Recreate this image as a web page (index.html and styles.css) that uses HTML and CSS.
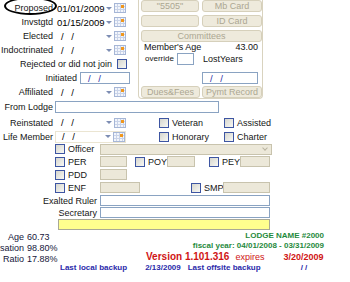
FILE: index.html
```html
<!DOCTYPE html>
<html lang="en">
<head>
    <meta charset="UTF-8">
    <title>Member Record</title>
    <link rel="stylesheet" href="styles.css">
</head>
<body>
<div class="form">
    <div class="top">
        <div class="dates">
            <div class="row">
                <label class="lbl"><span class="circled">Proposed</span></label>
                <div class="date"><span class="val">01/01/2009</span><span class="arrow"></span><span class="cal"></span></div>
            </div>
            <div class="row">
                <label class="lbl">Invstgtd</label>
                <div class="date"><span class="val">01/15/2009</span><span class="arrow"></span><span class="cal"></span></div>
            </div>
            <div class="row">
                <label class="lbl">Elected</label>
                <div class="date"><span class="val empty">/ /</span><span class="arrow"></span><span class="cal"></span></div>
            </div>
            <div class="row">
                <label class="lbl">Indoctrinated</label>
                <div class="date"><span class="val empty">/ /</span><span class="arrow"></span><span class="cal"></span></div>
            </div>
            <div class="row rejected">
                <span>Rejected or did not join</span><span class="cb"></span>
            </div>
            <div class="row">
                <label class="lbl wide">Initiated</label>
                <div class="box init"><span class="empty">/ /</span></div>
            </div>
            <div class="row">
                <label class="lbl">Affiliated</label>
                <div class="date"><span class="val empty">/ /</span><span class="arrow"></span><span class="cal"></span></div>
            </div>
        </div>

        <div class="panel">
            <div class="btn-grid">
                <div class="btn">"5505"</div>
                <div class="btn">Mb Card</div>
                <div class="btn"></div>
                <div class="btn">ID Card</div>
                <div class="btn span2">Committees</div>
            </div>
            <div class="age">
                <span>Member's Age</span><span>43.00</span>
            </div>
            <div class="override">
                <span class="small">override</span>
                <div class="box ovr"></div>
                <span class="lost">LostYears</span>
            </div>
            <div class="box pdate"><span class="empty">/ /</span></div>
            <div class="btn-row">
                <div class="btn dues">Dues&amp;Fees</div>
                <div class="btn pymt">Pymt Record</div>
            </div>
        </div>
    </div>

    <div class="lower">
        <div class="row">
            <label class="lbl">From Lodge</label>
            <div class="box lodge"></div>
        </div>
        <div class="row">
            <label class="lbl">Reinstated</label>
            <div class="date"><span class="val empty">/ /</span><span class="arrow"></span><span class="cal"></span></div>
            <div class="checks">
                <div class="opt"><span class="cb"></span>Veteran</div>
                <div class="opt"><span class="cb"></span>Assisted</div>
            </div>
        </div>
        <div class="row">
            <label class="lbl">Life Member</label>
            <div class="date framed"><span class="val empty">/ /</span><span class="arrow"></span><span class="cal"></span></div>
            <div class="checks">
                <div class="opt"><span class="cb"></span>Honorary</div>
                <div class="opt"><span class="cb"></span>Charter</div>
            </div>
        </div>
        <div class="row indent">
            <div class="opt first"><span class="cb"></span>Officer</div>
            <div class="field sel"><span class="chev"></span></div>
        </div>
        <div class="row indent">
            <div class="opt first"><span class="cb"></span>PER</div>
            <div class="field w27"></div>
            <div class="opt poy"><span class="cb"></span>POY</div>
            <div class="field w28"></div>
            <div class="opt pey"><span class="cb"></span>PEY</div>
            <div class="field w30"></div>
        </div>
        <div class="row indent">
            <div class="opt first"><span class="cb"></span>PDD</div>
            <div class="field w27"></div>
        </div>
        <div class="row indent">
            <div class="opt first"><span class="cb"></span>ENF</div>
            <div class="field w40"></div>
            <div class="opt smp"><span class="cb"></span>SMP</div>
            <div class="field w47"></div>
        </div>
        <div class="row">
            <label class="lbl officer-lbl">Exalted Ruler</label>
            <div class="box officer"></div>
        </div>
        <div class="row">
            <label class="lbl officer-lbl">Secretary</label>
            <div class="box officer"></div>
        </div>
        <div class="row">
            <div class="note"></div>
        </div>
    </div>

    <div class="bottom">
        <div class="stats">
            <span class="stat-lbl">Age</span><span>60.73</span>
            <span class="stat-lbl">sation</span><span>98.80%</span>
            <span class="stat-lbl">Ratio</span><span>17.88%</span>
        </div>
        <div class="info">
            <div class="green">LODGE NAME #2000</div>
            <div class="green">fiscal year: 04/01/2008 - 03/31/2009</div>
            <div class="version-line">
                <span class="version">Version 1.101.316</span>
                <span class="expires">expires</span>
                <span class="exp-date">3/20/2009</span>
            </div>
            <div class="backup-line">
                <span>Last local backup</span>
                <span class="local-date">2/13/2009</span>
                <span class="offsite">Last offsite backup</span>
                <span class="offsite-date">/ /</span>
            </div>
        </div>
    </div>
</div>
</body>
</html>
```

FILE: styles.css
```css
body {
    margin: 0;
    width: 350px;
    height: 282px;
    overflow: hidden;
    background: #fff;
    font-family: "Liberation Sans", Arial, sans-serif;
    font-size: 9px;
    color: #151515;
}
.row {
    display: flex;
    align-items: center;
}
.lbl {
    width: 55px;
    flex-shrink: 0;
    padding-right: 2px;
    box-sizing: border-box;
    text-align: right;
    white-space: nowrap;
}
.lbl.wide {
    width: 79px;
}
.circled {
    position: relative;
}
.circled::before {
    content: "";
    position: absolute;
    left: -10px;
    top: -6px;
    width: 49px;
    height: 14px;
    border: 2px solid #000;
    border-radius: 50%;
}

/* top block */
.top {
    display: flex;
    height: 99px;
}
.dates {
    width: 138px;
    padding-top: 1px;
    box-sizing: border-box;
    display: grid;
    grid-template-rows: repeat(7, 14px);
    align-content: start;
}
.date {
    display: flex;
    align-items: center;
    width: 71px;
    height: 12px;
    box-sizing: border-box;
}
.date.framed {
    border: 1px solid #ebe5d2;
}
.date .val {
    flex: 1;
    padding-left: 2px;
    font-size: 9.5px;
    color: #000;
}
.empty {
    color: #2b2ba6;
    word-spacing: 5px;
}
.date .val.empty {
    padding-left: 6px;
}
.arrow {
    width: 0;
    height: 0;
    margin-right: 2px;
    border-left: 3px solid transparent;
    border-right: 3px solid transparent;
    border-top: 3px solid #7d8db3;
}
.cal {
    width: 10px;
    height: 8px;
    border: 1px solid #a6b6d6;
    background:
        radial-gradient(circle at 7.5px 2.5px, #f0961a 1.4px, transparent 1.8px),
        repeating-linear-gradient(90deg, transparent 0 2px, #c9d3e8 2px 3px),
        repeating-linear-gradient(0deg, transparent 0 2px, #c9d3e8 2px 3px),
        #f2f5fb;
}
.rejected {
    justify-content: flex-end;
    padding-right: 11px;
}
.rejected .cb {
    margin-left: 5px;
}
.cb {
    width: 8px;
    height: 8px;
    flex-shrink: 0;
    border: 1px solid #3d55a2;
    background: linear-gradient(135deg, #d6d6ce, #f8f8f4);
}
.box {
    height: 12px;
    box-sizing: border-box;
    border: 1px solid #8aa3c2;
    background: #fff;
    display: flex;
    align-items: center;
}
.box .empty {
    padding-left: 7px;
    font-size: 9.5px;
}
.init {
    width: 50px;
    margin-left: 1px;
}

/* right panel */
.panel {
    width: 125px;
    height: 99px;
    box-sizing: border-box;
    padding-left: 2px;
    border: 1px solid #d9d3bf;
    border-top: none;
    border-radius: 0 0 4px 4px;
}
.btn-grid {
    display: grid;
    grid-template-columns: 58px 60px;
    grid-template-rows: repeat(3, 12px);
    gap: 3px;
}
.btn {
    display: flex;
    align-items: center;
    justify-content: center;
    box-sizing: border-box;
    border: 1px solid #d6d0bb;
    border-radius: 3px;
    background: #eeeadc;
    color: #aca792;
    white-space: nowrap;
}
.span2 {
    grid-column: span 2;
}
.age {
    display: flex;
    justify-content: space-between;
    align-items: center;
    height: 10px;
    padding: 0 4px 0 3px;
    color: #111;
}
.override {
    display: flex;
    align-items: center;
    height: 13px;
    padding-left: 4px;
}
.small {
    font-size: 8px;
    width: 32px;
}
.ovr {
    width: 17px;
}
.lost {
    margin-left: 9px;
}
.pdate {
    width: 56px;
    margin: 7px 0 0 61px;
}
.btn-row {
    display: flex;
    gap: 2px;
    margin-top: 2px;
}
.btn-row .btn {
    height: 12px;
}
.dues {
    width: 59px;
}
.pymt {
    width: 60px;
}

/* lower block */
.lower {
    display: grid;
    grid-template-rows: 16px 15px 13px 12px 13px 13px 13px 13px 11px 12px;
}
.lodge {
    width: 164px;
}
.checks {
    display: grid;
    grid-template-columns: 65px 65px;
    margin-left: 33px;
}
.opt {
    display: flex;
    align-items: center;
    gap: 3px;
    white-space: nowrap;
}
.indent {
    padding-left: 55px;
}
.opt.first {
    width: 45px;
}
.field {
    height: 11px;
    box-sizing: border-box;
    border: 1px solid #c8c3ad;
    background: #ece8d9;
}
.sel {
    width: 172px;
    display: flex;
    align-items: center;
    justify-content: flex-end;
    padding-right: 4px;
}
.chev {
    width: 3px;
    height: 3px;
    margin-top: -2px;
    border-right: 1px solid #b9b4a0;
    border-bottom: 1px solid #b9b4a0;
    transform: rotate(45deg);
}
.w27 { width: 27px; }
.w28 { width: 28px; }
.w30 { width: 30px; }
.w40 { width: 40px; }
.w47 { width: 47px; }
.poy {
    width: 32px;
    margin-left: 8px;
}
.pey {
    width: 31px;
    margin-left: 14px;
}
.smp {
    width: 32px;
    margin-left: 51px;
}
.officer-lbl {
    width: 100px;
    padding-right: 3px;
}
.officer {
    width: 170px;
    height: 11px;
}
.note {
    width: 212px;
    height: 11px;
    margin-left: 58px;
    box-sizing: border-box;
    border: 1px solid #a9a996;
    background: #ffff8e;
}

/* bottom block */
.bottom {
    display: flex;
    margin-top: 1px;
}
.stats {
    width: 58px;
    flex-shrink: 0;
    display: grid;
    grid-template-columns: 24px auto;
    grid-auto-rows: 11px;
    column-gap: 3px;
    align-items: center;
    color: #15153a;
    white-space: nowrap;
}
.stat-lbl {
    text-align: right;
}
.info {
    width: 266px;
    font-weight: bold;
    font-size: 8px;
}
.green {
    height: 10px;
    line-height: 10px;
    text-align: right;
    color: #1f8a3c;
}
.version-line {
    display: flex;
    align-items: baseline;
    height: 11px;
    padding-left: 88px;
    color: #d01414;
    white-space: nowrap;
}
.version {
    font-size: 10px;
}
.expires {
    margin-left: 6px;
    font-size: 9px;
    font-weight: normal;
}
.exp-date {
    margin-left: 19px;
    font-size: 9px;
}
.backup-line {
    display: flex;
    align-items: center;
    height: 11px;
    padding-left: 2px;
    color: #2a2aaa;
    white-space: nowrap;
}
.local-date {
    margin-left: 18px;
}
.offsite {
    margin-left: 7px;
}
.offsite-date {
    margin-left: 40px;
}
```
